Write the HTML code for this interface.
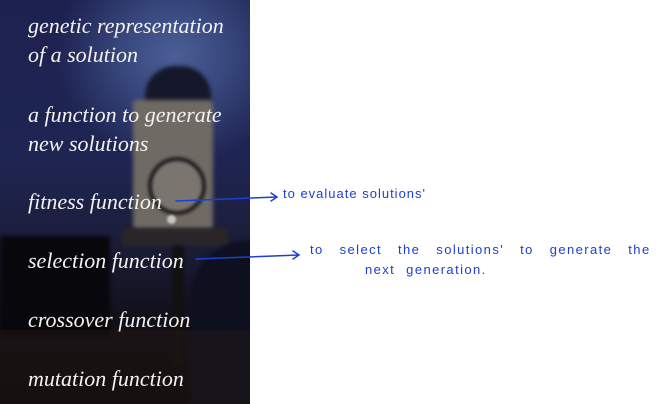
<!DOCTYPE html>
<html><head><meta charset="utf-8"><style>
*{margin:0;padding:0}
html,body{width:661px;height:404px;overflow:hidden}
body{background:#fff;position:relative}
#bg{position:absolute;left:0;top:0;width:250px;height:404px;overflow:hidden;
background:
radial-gradient(ellipse 120px 110px at 175px 55px,#4a5f96 0%,#3a4a80 40%,rgba(30,36,80,0) 100%),
linear-gradient(180deg,#1d2150 0%,#1f2552 40%,#1a1c36 62%,#120f18 80%,#0c0a0c 100%);}
.t{position:absolute;left:28px;color:#f4f2ee;font-family:"Liberation Serif",serif;font-style:italic;font-size:22px;line-height:29px;white-space:nowrap}
.h{position:absolute;color:#1c3fd6;font-family:"Liberation Sans",sans-serif;font-size:13px;white-space:nowrap}
</style></head><body>
<div id="bg">
 <div style="position:absolute;left:145px;top:66px;width:66px;height:40px;background:#15172a;border-radius:30px 30px 4px 4px;filter:blur(2px)"></div>
 <div style="position:absolute;left:133px;top:100px;width:80px;height:130px;background:#6f6a64;border-radius:4px;filter:blur(2px)"></div>
 <div style="position:absolute;left:148px;top:157px;width:50px;height:50px;border:4px solid #1e1c1e;border-radius:50%;background:#7a756e;filter:blur(1.5px)"></div>
 <div style="position:absolute;left:167px;top:215px;width:9px;height:9px;background:#c9c6c2;border-radius:50%;filter:blur(1px)"></div>
 <div style="position:absolute;left:122px;top:228px;width:106px;height:18px;background:#2a2628;filter:blur(2px)"></div>
 <div style="position:absolute;left:172px;top:246px;width:12px;height:120px;background:#111;filter:blur(2px)"></div>
 <div style="position:absolute;left:0;top:236px;width:110px;height:100px;background:#08080c;filter:blur(2px)"></div>
 <div style="position:absolute;left:190px;top:240px;width:120px;height:164px;background:#0e1020;border-radius:60px 0 0 0;filter:blur(2px)"></div>
 <div style="position:absolute;left:0;top:330px;width:250px;height:74px;background:rgba(40,28,20,.35)"></div>
</div>
<div class="t" style="top:11px">genetic representation<br>of a solution</div>
<div class="t" style="top:100px">a function to generate<br>new solutions</div>
<div class="t" style="top:187px">fitness function</div>
<div class="t" style="top:246px">selection function</div>
<div class="t" style="top:305px">crossover function</div>
<div class="t" style="top:364px">mutation function</div>
<svg style="position:absolute;left:0;top:0" width="661" height="404">
 <g stroke="#1c3fd6" stroke-width="1.5" fill="none" stroke-linecap="round">
  <path d="M176 201 L277 197 M271 193 L277 197 L271 201"/>
  <path d="M196 259 L299 255 M293 251 L299 255 L293 259"/>
 </g>
</svg>
<div class="h" style="left:283px;top:186px;letter-spacing:1px">to evaluate solutions'</div>
<div class="h" style="left:310px;top:242px;letter-spacing:1.4px;word-spacing:11px">to select the solutions' to generate the</div>
<div class="h" style="left:365px;top:262px;letter-spacing:1.4px;word-spacing:6px">next generation.</div>
</body></html>
